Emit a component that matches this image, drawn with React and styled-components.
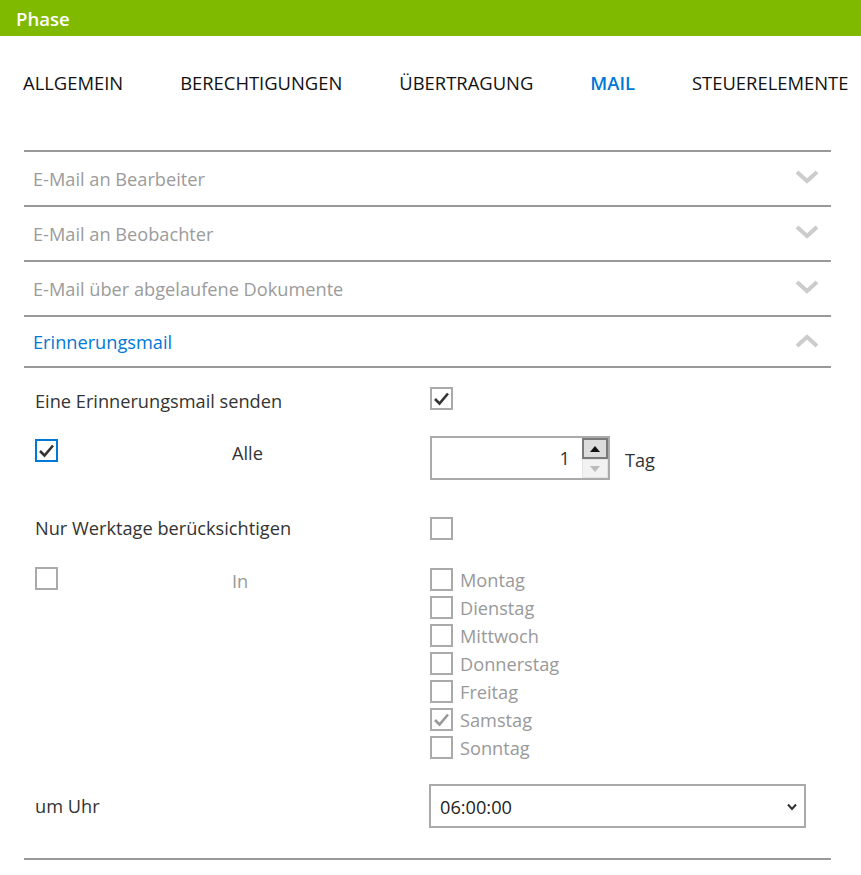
import React, { useState } from "react";
import styled, { createGlobalStyle } from "styled-components";

const GlobalStyle = createGlobalStyle`
  html, body { margin: 0; padding: 0; background: #fff; }
  body { font-family: "Segoe UI", "Open Sans", "Noto Sans", sans-serif; color: #333; }
  * { box-sizing: border-box; }
`;

const Page = styled.div`
  width: 861px;
  min-height: 875px;
  overflow: hidden;
`;

const TitleBar = styled.div`
  height: 36px;
  background: #7fba00;
  color: #fff;
  font-size: 18.6px;
  font-weight: 600;
  display: flex;
  align-items: center;
  padding-left: 16px;
`;

const Tabs = styled.nav`
  display: flex;
  gap: 57px;
  padding: 33px 0 0 23px;
  height: 114px;
  white-space: nowrap;
`;

const Tab = styled.div`
  font-size: 18.4px;
  line-height: 28px;
  text-transform: uppercase;
  color: ${(p) => (p.active ? "#0078d7" : "#111")};
  font-weight: ${(p) => (p.active ? 600 : 400)};
  cursor: pointer;
`;

const Content = styled.div`
  margin: 0 30px 0 24px;
  border-top: 2px solid #999;
`;

const PanelHead = styled.div`
  height: ${(p) => (p.open ? 51 : 55)}px;
  border-bottom: 2px solid #999;
  display: flex;
  align-items: center;
  justify-content: space-between;
  padding: 0 12px 0 9px;
  font-size: 18.2px;
  color: ${(p) => (p.open ? "#0078d7" : "#9b9b9b")};
  cursor: pointer;

  svg {
    margin-top: -3px;
  }
`;

const PanelBody = styled.div`
  padding: 19px 0 30px 11px;
  border-bottom: 2px solid #999;
`;

const Row = styled.div`
  display: grid;
  grid-template-columns: 197px 198px 1fr;
  align-items: ${(p) => (p.top ? "start" : "center")};
  margin-top: ${(p) => p.gap || 0}px;
  font-size: 18.2px;
`;

const Label = styled.div`
  grid-column: ${(p) => (p.wide ? "1 / 3" : "auto")};
  color: ${(p) => (p.muted ? "#999" : "#333")};
  line-height: 23px;
  padding-top: ${(p) => p.shift || 0}px;
  margin-bottom: -${(p) => p.shift || 0}px;
`;

const Box = styled.span`
  width: 23px;
  height: 23px;
  margin-top: ${(p) => p.offset || 0}px;
  border: 2px solid ${(p) => (p.focus ? "#0078d7" : "#aaa")};
  background: #fff;
  display: inline-flex;
  align-items: center;
  justify-content: center;
  flex-shrink: 0;
`;

const Inline = styled.div`
  display: flex;
  align-items: center;
  gap: 15px;
`;

const NumberField = styled.div`
  display: flex;
  width: 180px;
  height: 44px;
  border: 2px solid #aaa;
`;

const NumberInput = styled.input`
  flex: 1;
  min-width: 0;
  border: none;
  outline: none;
  text-align: right;
  font: inherit;
  font-size: 18.2px;
  color: #333;
  padding: 0 12px 0 0;
  background: #fff;
`;

const Spin = styled.div`
  width: 26px;
  display: flex;
  flex-direction: column;
`;

const SpinBtn = styled.div`
  flex: 1;
  display: flex;
  align-items: center;
  justify-content: center;
  background: ${(p) => (p.dim ? "#f2f2f2" : "#dcdcdc")};
  border: ${(p) => (p.dim ? "1px solid #e4e4e4" : "2px solid #7a7a7a")};
`;

const Unit = styled.span`
  color: #333;
  padding-top: 3px;
`;

const DayList = styled.div`
  display: flex;
  flex-direction: column;
  margin-top: -2px;
`;

const Day = styled.label`
  display: flex;
  align-items: center;
  gap: 7px;
  height: 28px;
  color: #999;
  font-size: 18.2px;

  span:last-child {
    padding-top: 2px;
  }
`;

const SelectWrap = styled.div`
  position: relative;
  width: 377px;
  height: 44px;
  margin-left: -1px;
`;

const Select = styled.select`
  appearance: none;
  width: 100%;
  height: 100%;
  border: 2px solid #aaa;
  background: #fff;
  font: inherit;
  font-size: 18.2px;
  color: #222;
  padding: 2px 0 0 9px;
  outline: none;
`;

const SelectIcon = styled.svg`
  position: absolute;
  right: 9px;
  top: 19px;
  pointer-events: none;
`;

const Chevron = ({ up }) => (
  <svg width="24" height="15" viewBox="0 0 24 15">
    <polyline
      points={up ? "2,13 12,4 22,13" : "2,2 12,11 22,2"}
      fill="none"
      stroke="#cccccc"
      strokeWidth="4"
    />
  </svg>
);

const Check = ({ color = "#333" }) => (
  <svg width="17" height="15" viewBox="0 0 17 15">
    <polyline points="2,8 6.5,12.5 15,2.5" fill="none" stroke={color} strokeWidth="2.6" />
  </svg>
);

const CheckBox = ({ checked, focus, color, offset }) => (
  <Box focus={focus} offset={offset}>{checked && <Check color={color} />}</Box>
);

const tabs = ["Allgemein", "Berechtigungen", "Übertragung", "Mail", "Steuerelemente"];
const panels = ["E-Mail an Bearbeiter", "E-Mail an Beobachter", "E-Mail über abgelaufene Dokumente"];
const days = ["Montag", "Dienstag", "Mittwoch", "Donnerstag", "Freitag", "Samstag", "Sonntag"];

export default function App() {
  const [count, setCount] = useState("1");
  return (
    <Page>
      <GlobalStyle />
      <TitleBar>Phase</TitleBar>
      <Tabs>
        {tabs.map((t) => (
          <Tab key={t} active={t === "Mail"}>{t}</Tab>
        ))}
      </Tabs>
      <Content>
        {panels.map((p) => (
          <PanelHead key={p}>
            <span>{p}</span>
            <Chevron />
          </PanelHead>
        ))}
        <PanelHead open>
          <span>Erinnerungsmail</span>
          <Chevron up />
        </PanelHead>
        <PanelBody>
          <Row>
            <Label wide shift={3}>Eine Erinnerungsmail senden</Label>
            <CheckBox checked />
          </Row>
          <Row gap={26} top>
            <CheckBox checked focus offset={3} />
            <Label shift={6}>Alle</Label>
            <Inline>
              <NumberField>
                <NumberInput value={count} onChange={(e) => setCount(e.target.value)} />
                <Spin>
                  <SpinBtn>
                    <svg width="10" height="6" viewBox="0 0 10 6"><polygon points="0,6 5,0 10,6" fill="#111" /></svg>
                  </SpinBtn>
                  <SpinBtn dim>
                    <svg width="10" height="6" viewBox="0 0 10 6"><polygon points="0,0 5,6 10,0" fill="#bbb" /></svg>
                  </SpinBtn>
                </Spin>
              </NumberField>
              <Unit>Tag</Unit>
            </Inline>
          </Row>
          <Row gap={37}>
            <Label wide>Nur Werktage berücksichtigen</Label>
            <CheckBox />
          </Row>
          <Row gap={27} top>
            <CheckBox />
            <Label muted shift={3}>In</Label>
            <DayList>
              {days.map((d) => (
                <Day key={d}>
                  <CheckBox checked={d === "Samstag"} color="#999" />
                  <span>{d}</span>
                </Day>
              ))}
            </DayList>
          </Row>
          <Row gap={23}>
            <Label wide>um Uhr</Label>
            <SelectWrap>
              <Select defaultValue="06:00:00">
                <option>06:00:00</option>
                <option>07:00:00</option>
                <option>08:00:00</option>
              </Select>
              <SelectIcon width="10" height="8" viewBox="0 0 10 8">
                <polyline points="1,1.5 5,6 9,1.5" fill="none" stroke="#333" strokeWidth="2" />
              </SelectIcon>
            </SelectWrap>
          </Row>
        </PanelBody>
      </Content>
    </Page>
  );
}
